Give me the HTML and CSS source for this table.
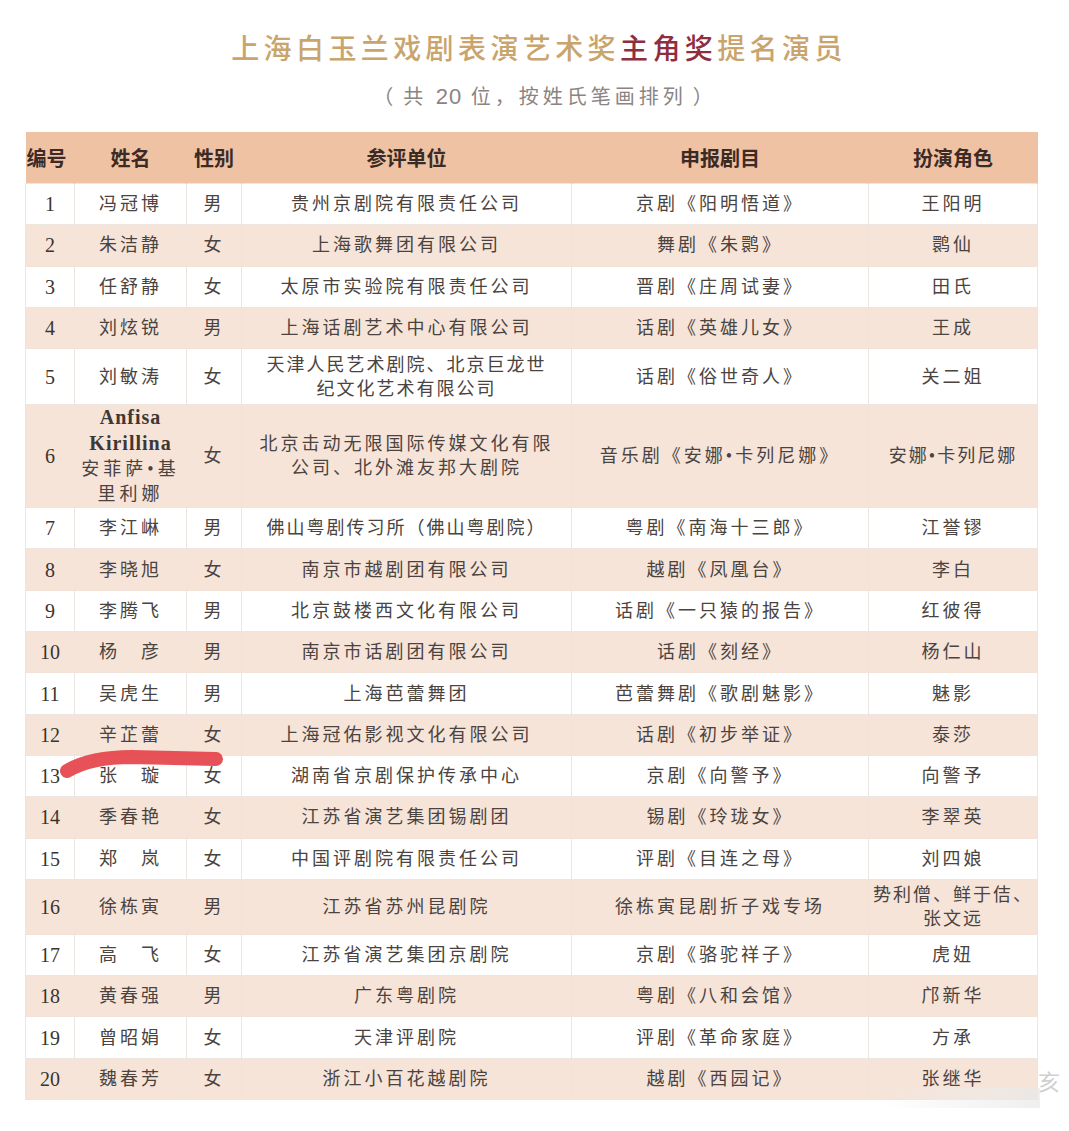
FILE: index.html
```html
<!DOCTYPE html>
<html lang="zh-CN">
<head>
<meta charset="utf-8">
<title>上海白玉兰戏剧表演艺术奖主角奖提名演员</title>
<link rel="stylesheet" href="styles.css">
</head>
<body>
<div class="page">
  <h1 class="title">上海白玉兰戏剧表演艺术奖<span class="hl">主角奖</span>提名演员</h1>
  <p class="subtitle"><span class="par">（</span>共 <span class="num">20</span> 位，按姓氏笔画排列<span class="par">）</span></p>
  <table class="list">
    <colgroup>
      <col class="c-no"><col class="c-name"><col class="c-sex"><col class="c-unit"><col class="c-play"><col class="c-role">
    </colgroup>
    <thead>
      <tr><th>编号</th><th>姓名</th><th>性别</th><th>参评单位</th><th>申报剧目</th><th>扮演角色</th></tr>
    </thead>
    <tbody>
      <tr><td class="n">1</td><td>冯冠博</td><td>男</td><td>贵州京剧院有限责任公司</td><td>京剧《阳明悟道》</td><td>王阳明</td></tr>
      <tr><td class="n">2</td><td>朱洁静</td><td>女</td><td>上海歌舞团有限公司</td><td>舞剧《朱鹮》</td><td>鹮仙</td></tr>
      <tr><td class="n">3</td><td>任舒静</td><td>女</td><td>太原市实验院有限责任公司</td><td>晋剧《庄周试妻》</td><td>田氏</td></tr>
      <tr><td class="n">4</td><td>刘炫锐</td><td>男</td><td>上海话剧艺术中心有限公司</td><td>话剧《英雄儿女》</td><td>王成</td></tr>
      <tr class="r2"><td class="n">5</td><td>刘敏涛</td><td>女</td><td class="tight">天津人民艺术剧院、北京巨龙世<br>纪文化艺术有限公司</td><td>话剧《俗世奇人》</td><td>关二姐</td></tr>
      <tr class="r4"><td class="n">6</td><td class="latin"><b>Anfisa</b><br><b>Kirillina</b><br>安菲萨•基<br>里利娜</td><td>女</td><td>北京击动无限国际传媒文化有限<br>公司、北外滩友邦大剧院</td><td>音乐剧《安娜•卡列尼娜》</td><td class="tight">安娜•卡列尼娜</td></tr>
      <tr><td class="n">7</td><td>李江崊</td><td>男</td><td class="tight">佛山粤剧传习所（佛山粤剧院）</td><td>粤剧《南海十三郎》</td><td>江誉镠</td></tr>
      <tr><td class="n">8</td><td>李晓旭</td><td>女</td><td>南京市越剧团有限公司</td><td>越剧《凤凰台》</td><td>李白</td></tr>
      <tr><td class="n">9</td><td>李腾飞</td><td>男</td><td>北京鼓楼西文化有限公司</td><td>话剧《一只猿的报告》</td><td>红彼得</td></tr>
      <tr><td class="n">10</td><td>杨　彦</td><td>男</td><td>南京市话剧团有限公司</td><td>话剧《刻经》</td><td>杨仁山</td></tr>
      <tr><td class="n">11</td><td>吴虎生</td><td>男</td><td>上海芭蕾舞团</td><td>芭蕾舞剧《歌剧魅影》</td><td>魅影</td></tr>
      <tr><td class="n">12</td><td>辛芷蕾</td><td>女</td><td>上海冠佑影视文化有限公司</td><td>话剧《初步举证》</td><td>泰莎</td></tr>
      <tr><td class="n">13</td><td>张　璇</td><td>女</td><td>湖南省京剧保护传承中心</td><td>京剧《向警予》</td><td>向警予</td></tr>
      <tr><td class="n">14</td><td>季春艳</td><td>女</td><td>江苏省演艺集团锡剧团</td><td>锡剧《玲珑女》</td><td>李翠英</td></tr>
      <tr><td class="n">15</td><td>郑　岚</td><td>女</td><td>中国评剧院有限责任公司</td><td>评剧《目连之母》</td><td>刘四娘</td></tr>
      <tr class="r2b"><td class="n">16</td><td>徐栋寅</td><td>男</td><td>江苏省苏州昆剧院</td><td>徐栋寅昆剧折子戏专场</td><td class="tight">势利僧、鲜于佶、<br>张文远</td></tr>
      <tr><td class="n">17</td><td>高　飞</td><td>女</td><td>江苏省演艺集团京剧院</td><td>京剧《骆驼祥子》</td><td>虎妞</td></tr>
      <tr><td class="n">18</td><td>黄春强</td><td>男</td><td>广东粤剧院</td><td>粤剧《八和会馆》</td><td>邝新华</td></tr>
      <tr><td class="n">19</td><td>曾昭娟</td><td>女</td><td>天津评剧院</td><td>评剧《革命家庭》</td><td>方承</td></tr>
      <tr><td class="n">20</td><td>魏春芳</td><td>女</td><td>浙江小百花越剧院</td><td>越剧《西园记》</td><td>张继华</td></tr>
    </tbody>
  </table>
</div>
<svg class="mark" width="1069" height="1131" viewBox="0 0 1069 1131" aria-hidden="true">
  <path d="M67,771 C82,762 102,757 132,757 L216,759" fill="none" stroke="#e5434a" stroke-width="14" stroke-linecap="round" opacity="0.92"/>
</svg>
<div class="wm"><span class="wm-streak"></span><span class="wm-char">亥</span></div>
</body>
</html>
```
FILE: styles.css
```css
html, body {
  margin: 0;
  padding: 0;
  background: #ffffff;
}
body {
  font-family: "Liberation Serif", "Noto Sans CJK SC", serif;
  color: #4a4340;
  position: relative;
  width: 1069px;
  height: 1131px;
  overflow: hidden;
}
.page {
  padding: 27px 32px 0 25px;
}
.title {
  margin: 0;
  height: 40px;
  line-height: 40px;
  text-align: center;
  font-family: "Noto Sans CJK SC", sans-serif;
  font-weight: 500;
  font-size: 28px;
  letter-spacing: 4.4px;
  color: #c9a46c;
  padding-left: 16px;
}
.title .hl {
  color: #8e2e3e;
}
.subtitle {
  margin: 14px 0 0 0;
  height: 30px;
  line-height: 30px;
  text-align: center;
  font-family: "Noto Sans CJK SC", sans-serif;
  font-size: 20px;
  letter-spacing: 4px;
  color: #8a8482;
  padding-left: 24px;
}
.subtitle .par {
  display: inline-block;
  width: 24px;
  letter-spacing: 0;
}
.subtitle .par:first-child {
  text-align: left;
  margin-right: 6px;
}
.subtitle .par:last-child {
  text-align: right;
  margin-left: 2px;
}
.subtitle .num {
  font-family: "Liberation Sans", sans-serif;
  font-size: 22px;
  letter-spacing: 1px;
}
.list {
  margin-top: 21px;
  width: 1012px;
  table-layout: fixed;
  border-collapse: collapse;
}
.c-no { width: 49px; }
.c-name { width: 112px; }
.c-sex { width: 55px; }
.c-unit { width: 330px; }
.c-play { width: 297px; }
.c-role { width: 169px; }
.list th {
  height: 51px;
  padding: 0;
  background: #efc2a4;
  font-family: "Noto Sans CJK SC", sans-serif;
  font-weight: 700;
  font-size: 20px;
  color: #3b2b24;
  text-align: center;
  border-right: 1px solid #efc2a4;
}
.list th:first-child {
  text-align: left;
  padding-left: 1px;
}
.list td {
  height: 40.3px;
  padding: 0;
  text-align: center;
  vertical-align: middle;
  font-family: "Liberation Serif", "Noto Sans CJK SC", serif;
  font-size: 18px;
  letter-spacing: 3px;
  line-height: 24px;
  color: #4a4340;
  border: 1px solid #ece5e0;
  white-space: nowrap;
}
.list td.n {
  font-size: 20px;
  letter-spacing: 0;
  color: #3a3431;
}
.list td.tight {
  letter-spacing: 2px;
}
.list tbody tr:nth-child(even) td {
  background: #f6e4d9;
  border-color: #f3e2d7;
}
.list tbody tr:nth-child(odd) td {
  background: #ffffff;
}
.list tr.r2 td {
  height: 55px;
}
.list tr.r2b td {
  height: 54px;
}
.list tr.r4 td {
  height: 99px;
}
.list td.latin {
  line-height: 25px;
  letter-spacing: 4px;
}
.list td.latin b {
  font-size: 20px;
  font-weight: 700;
  letter-spacing: 1px;
  color: #3e3835;
}
.mark {
  position: absolute;
  left: 0;
  top: 0;
  pointer-events: none;
}
.wm {
  position: absolute;
  left: 880px;
  top: 1062px;
  width: 189px;
  height: 50px;
}
.wm-streak {
  position: absolute;
  left: 0;
  top: 26px;
  width: 160px;
  height: 20px;
  background: linear-gradient(90deg, rgba(240,240,240,0) 0%, rgba(236,236,236,0.5) 60%, rgba(232,232,232,0.7) 100%);
}
.wm-char {
  position: absolute;
  left: 158px;
  top: 2px;
  font-family: "Noto Sans CJK SC", sans-serif;
  font-size: 22px;
  color: #d0d0d0;
}
```
